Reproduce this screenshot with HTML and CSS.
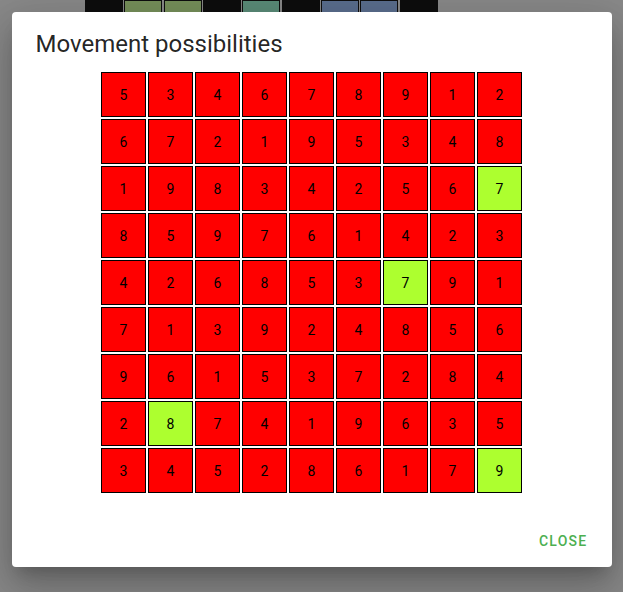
FILE: index.html
```html
<!DOCTYPE html>
<html lang="en">
<head>
<meta charset="utf-8">
<title>Movement possibilities</title>
<link rel="stylesheet" href="styles.css">
</head>
<body>
<div class="app">
  <div class="board-strip">
    <div class="bcell black"></div>
    <div class="bcell green"></div>
    <div class="bcell green"></div>
    <div class="bcell black"></div>
    <div class="bcell teal"></div>
    <div class="bcell black"></div>
    <div class="bcell blue"></div>
    <div class="bcell blue"></div>
    <div class="bcell black"></div>
  </div>
</div>
<div class="overlay">
  <div class="dialog">
    <div class="title">Movement possibilities</div>
    <div class="content">
      <div class="grid">
        <div class="cell">5</div><div class="cell">3</div><div class="cell">4</div><div class="cell">6</div><div class="cell">7</div><div class="cell">8</div><div class="cell">9</div><div class="cell">1</div><div class="cell">2</div>
        <div class="cell">6</div><div class="cell">7</div><div class="cell">2</div><div class="cell">1</div><div class="cell">9</div><div class="cell">5</div><div class="cell">3</div><div class="cell">4</div><div class="cell">8</div>
        <div class="cell">1</div><div class="cell">9</div><div class="cell">8</div><div class="cell">3</div><div class="cell">4</div><div class="cell">2</div><div class="cell">5</div><div class="cell">6</div><div class="cell ok">7</div>
        <div class="cell">8</div><div class="cell">5</div><div class="cell">9</div><div class="cell">7</div><div class="cell">6</div><div class="cell">1</div><div class="cell">4</div><div class="cell">2</div><div class="cell">3</div>
        <div class="cell">4</div><div class="cell">2</div><div class="cell">6</div><div class="cell">8</div><div class="cell">5</div><div class="cell">3</div><div class="cell ok">7</div><div class="cell">9</div><div class="cell">1</div>
        <div class="cell">7</div><div class="cell">1</div><div class="cell">3</div><div class="cell">9</div><div class="cell">2</div><div class="cell">4</div><div class="cell">8</div><div class="cell">5</div><div class="cell">6</div>
        <div class="cell">9</div><div class="cell">6</div><div class="cell">1</div><div class="cell">5</div><div class="cell">3</div><div class="cell">7</div><div class="cell">2</div><div class="cell">8</div><div class="cell">4</div>
        <div class="cell">2</div><div class="cell ok">8</div><div class="cell">7</div><div class="cell">4</div><div class="cell">1</div><div class="cell">9</div><div class="cell">6</div><div class="cell">3</div><div class="cell">5</div>
        <div class="cell">3</div><div class="cell">4</div><div class="cell">5</div><div class="cell">2</div><div class="cell">8</div><div class="cell">6</div><div class="cell">1</div><div class="cell">7</div><div class="cell ok">9</div>
      </div>
    </div>
    <div class="actions">
      <button class="btn">Close</button>
    </div>
  </div>
</div>
</body>
</html>
```

FILE: styles.css
```css
html, body {
  margin: 0;
  padding: 0;
}
body {
  width: 623px;
  height: 592px;
  background: #898989;
  font-family: Roboto, "Liberation Sans", sans-serif;
  overflow: hidden;
  position: relative;
}
.app {
  padding-left: 85px;
}
.board-strip {
  display: flex;
  gap: 1.33px;
}
.bcell {
  width: 38px;
  height: 30px;
  box-sizing: border-box;
  border: 1px solid #0e0e0e;
}
.bcell.black { background: #0e0e0e; }
.bcell.green { background: #76905a; }
.bcell.teal { background: #5a8c78; }
.bcell.blue { background: #5a6e8e; }

.overlay {
  position: absolute;
  inset: 0;
  display: flex;
  justify-content: center;
  align-items: flex-start;
  padding-top: 12px;
}
.dialog {
  width: 600px;
  height: 555px;
  background: #fff;
  border-radius: 4px;
  box-shadow: 0 11px 15px -7px rgba(0,0,0,.2), 0 24px 38px 3px rgba(0,0,0,.14), 0 9px 46px 8px rgba(0,0,0,.12);
  display: flex;
  flex-direction: column;
}
.title {
  padding: 16px 24px 10px;
  font-size: 24px;
  line-height: 32px;
  font-weight: 400;
  letter-spacing: normal;
  color: rgba(0,0,0,.87);
}
.content {
  padding: 0 24px 20px;
  display: flex;
  justify-content: center;
}
.grid {
  display: grid;
  grid-template-columns: repeat(9, 45px);
  grid-auto-rows: 45px;
  gap: 2px;
  padding: 2px;
}
.cell {
  box-sizing: border-box;
  border: 1px solid #000;
  background: #ff0000;
  display: flex;
  align-items: center;
  justify-content: center;
  font-size: 14px;
  color: #000;
}
.cell.ok {
  background: #adff2f;
}
.actions {
  padding: 8px;
  display: flex;
  justify-content: flex-end;
}
.btn {
  height: 36px;
  padding: 0 16px;
  border: none;
  background: transparent;
  font-family: Roboto, "Liberation Sans", sans-serif;
  font-size: 14px;
  font-weight: 500;
  letter-spacing: 0.0892em;
  text-transform: uppercase;
  color: #4caf50;
  border-radius: 4px;
}
```
